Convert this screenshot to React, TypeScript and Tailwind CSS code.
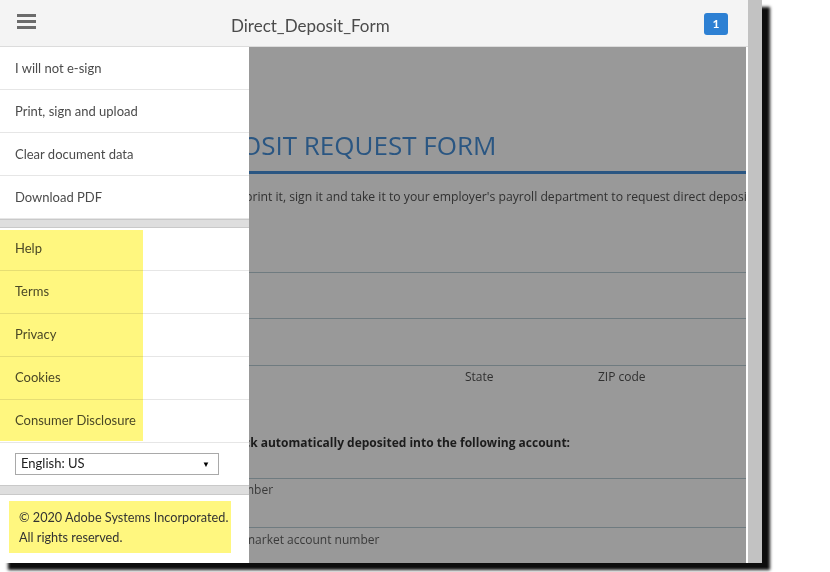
import React from "react";

const menuTop = ["I will not e-sign", "Print, sign and upload", "Clear document data", "Download PDF"];
const menuLinks = ["Help", "Terms", "Privacy", "Cookies", "Consumer Disclosure"];

function Hamburger() {
  return (
    <div className="flex flex-col gap-[3px] w-[19px] -mt-[3px]">
      <span className="h-[3px] bg-[#6b6b6b]" />
      <span className="h-[3px] bg-[#6b6b6b]" />
      <span className="h-[3px] bg-[#6b6b6b]" />
    </div>
  );
}

// a document line whose start sits under the side drawer
function Clipped({ hidden, shown, edge, className }: { hidden: string; shown: string; edge: string; className?: string }) {
  return (
    <div className={"flex whitespace-nowrap " + (className ?? "")}>
      <span className={"flex justify-end overflow-hidden shrink-0 " + edge}>{hidden}</span>
      <span>{shown}</span>
    </div>
  );
}

export default function App() {
  return (
    <div className="w-[830px] h-[572px] bg-white overflow-hidden font-['Lato',sans-serif]">
      <div className="relative flex w-[762px] h-[563px] shadow-[8px_7px_3px_rgba(0,0,0,0.95)]">
        {/* main window */}
        <div className="flex flex-col w-[748px] h-full">
          <div className="flex items-center h-[47px] bg-[#f4f4f4] border-b border-[#dcdcdc] px-[17px] shrink-0">
            <Hamburger />
            <div className="ml-[195px] pt-[6px] text-[17px] text-[#4b4b4b]">Direct_Deposit_Form</div>
            <div className="ml-auto mr-[3px] mt-[2px] flex items-center justify-center w-[24px] h-[22px] rounded-[3px] bg-[#2d80d3] text-white text-[12px] font-bold">
              1
            </div>
          </div>

          <div className="relative flex-1 overflow-hidden bg-[#999999] border-r-2 border-white">
            {/* document behind the overlay */}
            <div className="font-['Open_Sans',sans-serif] text-[#303030] whitespace-nowrap">
              <Clipped
                className="pt-[80px] text-[26px] leading-[36px] text-[#2a5682]"
                edge="w-[241px]"
                hidden="DIRECT DEP"
                shown="OSIT REQUEST FORM"
              />
              <div className="mt-[8px] h-[3px] bg-[#2a5682]" />
              <Clipped
                className="mt-[13px] text-[12.2px] leading-[20px]"
                edge="w-[245px]"
                hidden="Please fill out this form, "
                shown="print it, sign it and take it to your employer's payroll department to request direct deposit."
              />
              <div className="mt-[65px] border-t border-[#6f7b80]" />
              <div className="mt-[45px] border-t border-[#6f7b80]" />
              <div className="mt-[46px] border-t border-[#6f7b80]" />
              <div className="flex mt-[1px] text-[12px] leading-[20px]">
                <span className="w-[465px] pl-[20px]">City</span>
                <span className="w-[133px]">State</span>
                <span>ZIP code</span>
              </div>
              <Clipped
                className="mt-[46px] text-[12px] leading-[20px] font-bold text-[#1c1c1c]"
                edge="w-[244px]"
                hidden="I wish to have my payche"
                shown="ck automatically deposited into the following account:"
              />
              <div className="mt-[25px] border-t border-[#6f7b80]" />
              <Clipped
                className="mt-[1px] text-[12px] leading-[20px] text-[#3a3a3a]"
                edge="w-[243px]"
                hidden="Checking account nu"
                shown="mber"
              />
              <div className="mt-[27px] border-t border-[#6f7b80]" />
              <Clipped
                className="mt-[2px] text-[12px] leading-[20px] text-[#3a3a3a]"
                edge="w-[244px]"
                hidden="Savings or money "
                shown="market account number"
              />
            </div>

            {/* side menu drawer over the document */}
            <div className="absolute left-0 top-0 bottom-0 w-[249px] bg-white flex flex-col text-[13px] text-[#4b4b4b]">
              {menuTop.map((m) => (
                <div key={m} className="h-[43px] shrink-0 flex items-center px-[15px] pt-[1px] border-b border-[#e6e6e6] last:border-b-0">
                  {m}
                </div>
              ))}
              <div className="h-[9px] shrink-0 bg-[#dedede] border-y border-[#c9c9c9]" />
              <div className="relative shrink-0">
                {menuLinks.map((m) => (
                  <div key={m} className="h-[43px] flex items-center px-[15px] border-b border-[#e6e6e6]">
                    {m}
                  </div>
                ))}
                <div className="absolute left-0 top-[2px] bottom-[2px] w-[143px] bg-[#fff77f] mix-blend-multiply" />
              </div>
              <div className="h-[42px] shrink-0 flex items-center px-[15px]">
                <div className="w-[204px] h-[22px] flex items-center justify-between border border-[#a9a9a9] pl-[5px] pr-[8px] text-[13px] text-[#222]">
                  <span>English: US</span>
                  <span className="text-[8px] text-black">▼</span>
                </div>
              </div>
              <div className="h-[10px] shrink-0 bg-[#dedede] border-y border-[#c9c9c9]" />
              <div className="mt-[6px] ml-[9px] w-[222px] shrink-0 bg-[#fff77f] px-[10px] py-[6px] leading-[20px] text-[12.7px] text-[#333] whitespace-nowrap">
                <div>© 2020 Adobe Systems Incorporated.</div>
                <div>All rights reserved.</div>
              </div>
            </div>
          </div>
        </div>
        {/* scrollbar strip */}
        <div className="w-[14px] h-full bg-[#c2c2c2]" />
      </div>
    </div>
  );
}
